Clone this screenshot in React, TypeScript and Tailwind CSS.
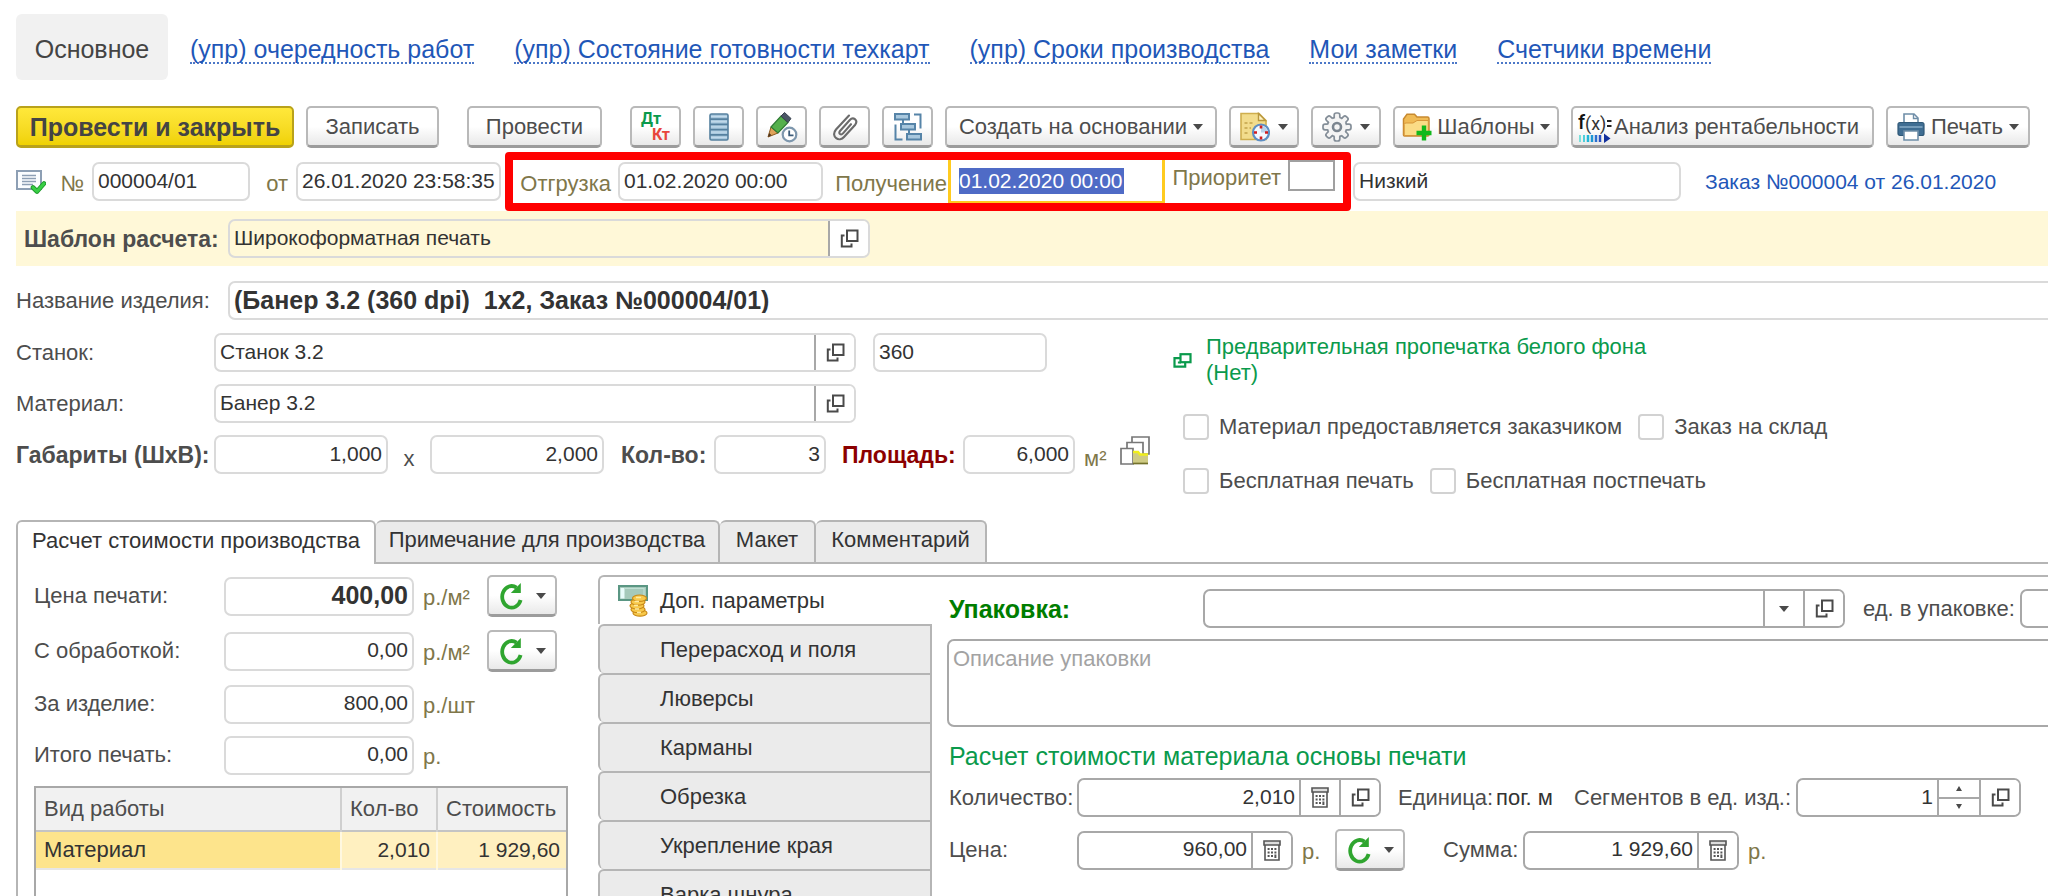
import { useId } from "react";
import type { ReactNode } from "react";

const soft = "border-[#dadada]";
const strong = "border-[#a8a8a8]";

function Caret() {
  return (
    <svg viewBox="0 0 12 7" className="h-[6px] w-[10px] shrink-0" aria-hidden="true">
      <path d="M0 0H12L6 7Z" fill="#4a4a4a" />
    </svg>
  );
}

function OpenIcon() {
  return (
    <svg viewBox="0 0 19 19" className="h-[19px] w-[19px]" fill="none" stroke="#4a4a4a" strokeWidth="2" aria-hidden="true">
      <rect x="7" y="1.5" width="10.5" height="10.5" />
      <path d="M4.5 6.5H1.8V17.4H11.5V14.5" />
    </svg>
  );
}

function GreenOpenIcon() {
  return (
    <svg viewBox="0 0 19 15" className="h-[15px] w-[19px] shrink-0" fill="none" stroke="#0a9a4c" strokeWidth="2.2" aria-hidden="true">
      <rect x="7.5" y="1.2" width="10" height="8" />
      <path d="M7 5.2H1.5V13.6H12.2V9.6" />
      <path d="M6 8.5V9.5H8" />
    </svg>
  );
}

function CalcIcon() {
  return (
    <svg viewBox="0 0 18 21" className="h-[21px] w-[18px]" fill="none" stroke="#555" strokeWidth="1.6" aria-hidden="true">
      <path d="M1 1H17V5H1Z" fill="#ddd" />
      <path d="M2 5V20H16V5" />
      <path d="M4.6 9H13.5M4.6 12.5H13.5M4.6 16H10" strokeWidth="2" strokeDasharray="2 1.4" />
      <path d="M12.4 14.5V18" strokeWidth="2" />
    </svg>
  );
}

function RefreshIcon() {
  return (
    <svg viewBox="0 0 26 28" className="h-7 w-[26px]" aria-hidden="true">
      <path d="M18.5 5.6A9.4 10.8 0 1 0 22.6 18" fill="none" stroke="#2fa52f" strokeWidth="3.8" />
      <path d="M22.8 1V11H12.8Z" fill="#2fa52f" />
    </svg>
  );
}

function ListIcon() {
  return (
    <svg viewBox="0 0 20 28" className="h-7 w-5" aria-hidden="true">
      <rect x="1" y="1" width="18" height="26" rx="1.5" fill="#a9c8de" stroke="#55809f" strokeWidth="1.6" />
      <path d="M1 6.2H19M1 11.4H19M1 16.6H19M1 21.8H19" stroke="#55809f" strokeWidth="1.8" />
      <path d="M2 3.5H18M2 8.7H18M2 13.9H18M2 19.1H18M2 24.4H18" stroke="#c5dcec" strokeWidth="1" />
    </svg>
  );
}

function PencilClockIcon() {
  return (
    <svg viewBox="0 0 32 32" className="h-8 w-8" aria-hidden="true">
      <path d="M2 26L5 16L12 22Z" fill="#e0a35a" stroke="#8c5a20" strokeWidth="1" />
      <path d="M2 26L3.2 22L5.5 24.3Z" fill="#4a3520" />
      <path d="M5 16L15 5L22 11.5L12 22Z" fill="#55b04c" stroke="#2f7a34" strokeWidth="1.2" />
      <path d="M15 5L18.5 1.5L25 7.5L22 11.5Z" fill="#4b5666" stroke="#38414e" strokeWidth="1" />
      <circle cx="23.5" cy="23.5" r="6.8" fill="#fff" stroke="#7e97ad" strokeWidth="2.2" />
      <path d="M23.2 19.5V24.4H27.5" fill="none" stroke="#3d5c7a" strokeWidth="1.8" />
    </svg>
  );
}

function ClipIcon() {
  return (
    <svg viewBox="0 0 28 28" className="h-7 w-7" fill="none" stroke="#6b6b6b" strokeWidth="2.1" strokeLinecap="round" aria-hidden="true">
      <path d="M18 2.5L5 16.5C2 20 3 23.5 5.2 25.2C7.5 27 10.8 26.5 13 24L24 12C26 9.5 25.5 7.5 24 6.2C22.3 5 20.3 5.4 18.8 7L9 18C8 19.3 8.2 20.4 9 21C9.8 21.7 11 21.5 12 20.4L20 11.2" />
    </svg>
  );
}

function TreeIcon() {
  return (
    <svg viewBox="0 0 28 28" className="h-7 w-7" fill="#a9c8de" stroke="#5684a8" strokeWidth="2" aria-hidden="true">
      <rect x="1" y="1" width="14" height="5.5" />
      <rect x="7" y="11" width="14" height="5.5" />
      <rect x="13" y="21" width="14" height="5.5" />
      <path d="M9 6V11M15 16.5V21" />
      <path d="M20 1.5H26.5V15.5M1.5 11.5V26.5H8.5" fill="none" />
    </svg>
  );
}

function DocClockIcon() {
  return (
    <svg viewBox="0 0 30 30" className="h-[30px] w-[30px]" aria-hidden="true">
      <path d="M1 1.5H19L26 8.5V27.5H1Z" fill="#f2dc8c" stroke="#cfae4e" strokeWidth="1.6" />
      <path d="M18.5 1.5L25.5 8.5H18.5Z" fill="#fff3c4" stroke="#b8973e" strokeWidth="1.4" />
      <path d="M4.5 11H13M4.5 16H11M4.5 21H9" stroke="#c2a34a" strokeWidth="1.4" strokeDasharray="3 2" />
      <circle cx="21" cy="20.5" r="8" fill="#f4f9ff" stroke="#5e8fc4" strokeWidth="2.2" />
      <path d="M21 20.5V13.5A7 7 0 0 1 27.5 20.5Z" fill="#b9d2ea" />
      <path d="M21 13.5V16.5M21 24.5V27.5M14 20.5H17M25 20.5H28" stroke="#d11f1f" strokeWidth="2.6" />
    </svg>
  );
}

function GearIcon() {
  const teeth = [0, 45, 90, 135, 180, 225, 270, 315];
  return (
    <svg viewBox="0 0 30 30" className="h-[30px] w-[30px]" aria-hidden="true">
      {teeth.map((a) => (
        <rect key={a} x="12.2" y="1" width="5.6" height="7" rx="2" fill="#f4f4f4" stroke="#848e98" strokeWidth="1.7" transform={`rotate(${a} 15 15)`} />
      ))}
      <circle cx="15" cy="15" r="9.8" fill="#f4f4f4" />
      <circle cx="15" cy="15" r="9.8" fill="none" stroke="#848e98" strokeWidth="1.7" strokeDasharray="3 4.697" strokeDashoffset="-2.35" />
      <circle cx="15" cy="15" r="4" fill="none" stroke="#7b858f" strokeWidth="2.6" />
    </svg>
  );
}

function FolderPlusIcon() {
  return (
    <svg viewBox="0 0 30 28" className="h-7 w-[30px] shrink-0" aria-hidden="true">
      <path d="M1.5 6V22Q1.5 23 2.5 23H25.5Q27 23 27 21.5V5.5Q27 4 25.5 4H15L12.5 1.2H5Z" fill="#f0bb55" stroke="#c88a30" strokeWidth="1.5" />
      <path d="M2.2 22.5V11.5Q2.2 10 4 10H11L15 7.5H26.3V22.5Z" fill="#fbdc86" stroke="#d8973a" strokeWidth="1" />
      <path d="M22 12.5V27.5M14.5 20H29.5" stroke="#12b81c" strokeWidth="4.4" />
    </svg>
  );
}

function FxIcon() {
  return (
    <svg viewBox="0 0 34 32" className="h-8 w-[34px] shrink-0" aria-hidden="true">
      <text x="0" y="18" fontFamily="Roboto, sans-serif" fontSize="20" fontWeight="500" fill="#111">f</text>
      <text x="7" y="19" fontFamily="Roboto, sans-serif" fontSize="18" fill="#333">(x)</text>
      <path d="M29 10H33.500M29 15H33.500" stroke="#222" strokeWidth="2" />
      <path d="M2 24V31" stroke="#7be0dc" strokeWidth="2" />
      <path d="M6 24V31" stroke="#4fd0da" strokeWidth="2" />
      <path d="M10 24V31" stroke="#22b6d8" strokeWidth="2.5" />
      <path d="M14 24V31" stroke="#1a96d4" strokeWidth="2.5" />
      <path d="M18 24V31" stroke="#2a6fd0" strokeWidth="2.5" />
      <path d="M22 24V31" stroke="#2a50c0" strokeWidth="2.5" />
      <path d="M26 22.5L32.5 27.5L26 32Z" fill="#12309c" />
    </svg>
  );
}

function PrinterIcon() {
  return (
    <svg viewBox="0 0 28 28" className="h-7 w-7 shrink-0" aria-hidden="true">
      <path d="M7 10V1H17L21 5V10" fill="#fff" stroke="#6f8ea8" strokeWidth="1.6" />
      <path d="M16.5 1V5.5H21" fill="none" stroke="#6f8ea8" strokeWidth="1.4" />
      <rect x="1" y="9.5" width="26" height="13" rx="2" fill="#3f6d92" stroke="#2f5877" strokeWidth="1.2" />
      <path d="M2.5 14H25.5" stroke="#82a7c4" strokeWidth="1.6" />
      <path d="M7 18H21V27H7Z" fill="#fff" stroke="#6f8ea8" strokeWidth="1.6" />
    </svg>
  );
}

function PostedIcon() {
  return (
    <svg viewBox="0 0 30 24" className="h-6 w-[30px] shrink-0" aria-hidden="true">
      <rect x="1" y="1" width="24" height="18" fill="#fbfdff" stroke="#8d9fb4" strokeWidth="2" />
      <path d="M6 5.5H20M6 8.5H20M6 11.5H20M6 14.5H17" stroke="#8d9fb4" strokeWidth="1.3" />
      <path d="M17 17.5L21 21.5L28 13.5" fill="none" stroke="#1f9a2c" strokeWidth="4.6" strokeLinecap="round" strokeLinejoin="round" />
      <path d="M17 17.5L21 21.5L28 13.5" fill="none" stroke="#38cf45" strokeWidth="2.8" strokeLinecap="round" strokeLinejoin="round" />
    </svg>
  );
}

function FoldersIcon() {
  return (
    <svg viewBox="0 0 30 29" className="h-[29px] w-[30px]" fill="#fff" stroke="#777" strokeWidth="1.7" aria-hidden="true">
      <path d="M12 1H29V18H12Z" />
      <path d="M7 6.5H23V22H7Z" />
      <path d="M1 12.5H13V28H1Z" />
      <path d="M13 17H18L20 19H28V27H13Z" fill="#cfcb84" stroke="none" />
      <path d="M13 16H18L20 18.5H28" stroke="#f0ee1c" strokeWidth="2.6" fill="none" />
      <path d="M13 27.5H28" stroke="#74722c" strokeWidth="1.7" />
    </svg>
  );
}

function MoneyIcon() {
  return (
    <svg viewBox="0 0 30 32" className="h-8 w-[30px] shrink-0" aria-hidden="true">
      <rect x="1" y="1" width="28" height="14" fill="#a5c9ba" stroke="#5a9683" strokeWidth="2" />
      <rect x="2.5" y="3" width="4" height="10.5" fill="#e8fbfa" />
      <path d="M6 3.5H26V12" fill="none" stroke="#bfe0d4" strokeWidth="1.2" />
      <g fill="#f7c84a" stroke="#c98a18" strokeWidth="1.2">
        <ellipse cx="22" cy="28" rx="7" ry="3.2" />
        <ellipse cx="20" cy="24.5" rx="7" ry="3.2" />
        <ellipse cx="19" cy="20.8" rx="7" ry="3.2" />
        <ellipse cx="20" cy="17" rx="7" ry="3.2" />
        <ellipse cx="21.5" cy="13.2" rx="7" ry="3.2" />
      </g>
      <path d="M18 12.5H23M16.500 16.500H21M16 20.500H20M17 24H21M19 27.500H23" stroke="#fdeaa0" strokeWidth="1.4" />
    </svg>
  );
}

function ToolButton({ className = "", label, children }: { className?: string; label?: string; children: ReactNode }) {
  return (
    <button
      type="button"
      aria-label={label}
      className={`flex h-[42px] shrink-0 items-center justify-center whitespace-nowrap rounded-[5px] border-2 border-b-[3px] border-[#b9b9b9] border-b-[#9c9c9c] bg-linear-to-b from-white from-50% to-[#e9e9e9] ${className}`}
    >
      {children}
    </button>
  );
}

type FieldProps = {
  label: string;
  value?: string;
  className: string;
  inputClass?: string;
  border?: string;
  id?: string;
  children?: ReactNode;
};

function Field({ label, value = "", className, inputClass = "text-[21px]", border = soft, id, children }: FieldProps) {
  return (
    <div className={`flex h-[39px] shrink-0 overflow-hidden rounded-[7px] border-2 ${border} ${className}`}>
      <input
        id={id}
        aria-label={id ? undefined : label}
        defaultValue={value}
        className={`min-w-0 flex-1 bg-transparent px-1 pb-[2px] text-[#333] outline-none ${inputClass}`}
      />
      {children}
    </div>
  );
}

function FieldButton({ label, children }: { label: string; children: ReactNode }) {
  return (
    <button type="button" aria-label={label} className="flex w-10 shrink-0 items-center justify-center border-l-2 border-[#a8a8a8] bg-white">
      {children}
    </button>
  );
}

function Check({ label }: { label: string }) {
  return (
    <label className="flex items-center gap-[10px] whitespace-nowrap">
      <input type="checkbox" className="h-[26px] w-[26px] shrink-0 appearance-none rounded-[4px] border-2 border-[#d2d2d2] bg-white" />
      {label}
    </label>
  );
}

function RefreshButton() {
  return (
    <ToolButton label="Обновить" className="w-[70px] gap-3">
      <RefreshIcon />
      <Caret />
    </ToolButton>
  );
}

function TopLinks() {
  const links = ["(упр) очередность работ", "(упр) Состояние готовности техкарт", "(упр) Сроки производства", "Мои заметки", "Счетчики времени"];
  return (
    <nav className="ml-4 flex items-center gap-10 whitespace-nowrap pt-[14px] text-[25px]">
      <span className="-mr-[18px] flex h-[66px] w-[152px] items-center justify-center rounded-md bg-[#f1f1f1] pt-1 text-[#444]">Основное</span>
      {links.map((t) => (
        <a key={t} href="#" className="mt-[6px] border-b-2 border-dotted border-[#4c78c8] leading-[26px] text-[#1f57b8]">
          {t}
        </a>
      ))}
    </nav>
  );
}

function Toolbar() {
  return (
    <div className="ml-4 mt-[26px] flex gap-[12px]">
      <button
        type="button"
        className="flex h-[42px] w-[278px] shrink-0 items-center justify-center whitespace-nowrap rounded-[5px] border-2 border-b-[3px] border-[#b9a21a] bg-linear-to-b from-[#ffe83a] to-[#f0d200] text-[25px] font-bold text-[#444]"
      >
        Провести и закрыть
      </button>
      <ToolButton className="mr-4 w-[133px]">Записать</ToolButton>
      <ToolButton className="mr-4 w-[135px]">Провести</ToolButton>
      <ToolButton label="Проводки" className="w-[51px]">
        <span className="flex flex-col font-['Roboto',sans-serif] text-[16px] font-bold leading-[16px]">
          <span className="text-left text-[#0a9a4c]">Дт</span>
          <span className="pl-[11px] text-[#e8453c]">Кт</span>
        </span>
      </ToolButton>
      <ToolButton label="Список" className="w-[51px]"><ListIcon /></ToolButton>
      <ToolButton label="История" className="w-[51px]"><PencilClockIcon /></ToolButton>
      <ToolButton label="Файлы" className="w-[51px]"><ClipIcon /></ToolButton>
      <ToolButton label="Структура" className="w-[51px]"><TreeIcon /></ToolButton>
      <ToolButton className="w-[272px] gap-[6px]">Создать на основании <Caret /></ToolButton>
      <ToolButton label="Напоминание" className="w-[70px] gap-2"><DocClockIcon /><Caret /></ToolButton>
      <ToolButton label="Настройки" className="w-[70px] gap-2"><GearIcon /><Caret /></ToolButton>
      <ToolButton className="w-[166px] gap-[5px]"><FolderPlusIcon />Шаблоны <Caret /></ToolButton>
      <ToolButton className="w-[303px] gap-[2px] pr-2"><FxIcon />Анализ рентабельности</ToolButton>
      <ToolButton className="w-[144px] gap-[6px]"><PrinterIcon />Печать <Caret /></ToolButton>
    </div>
  );
}

function DocumentRow() {
  return (
    <div className="ml-4 mt-1 flex h-[59px] items-center whitespace-nowrap text-[#80774a]">
      <PostedIcon />
      <label htmlFor="num" className="w-[46px] shrink-0 pr-2 pt-1 text-right">№</label>
      <Field id="num" label="Номер" value="000004/01" className="w-[158px]" />
      <label htmlFor="date" className="w-[46px] shrink-0 pr-2 pt-1 text-right">от</label>
      <Field id="date" label="Дата" value="26.01.2020 23:58:35" className="w-[205px]" />
      <div className="ml-1 flex h-[59px] w-[846px] shrink-0 items-center rounded-[4px] border-8 border-[#ff0000]">
        <label htmlFor="ship" className="w-[105px] shrink-0 pr-[7px] pt-1 text-right">Отгрузка</label>
        <Field id="ship" label="Отгрузка" value="01.02.2020 00:00" className="w-[205px]" />
        <label htmlFor="recv" className="w-[125px] shrink-0 pr-[1px] pt-1 text-right">Получение</label>
        <div className="flex h-full w-[217px] shrink-0 items-center border-x-[3px] border-b-2 border-[#ffcb1f] pl-2">
          <input id="recv" defaultValue="01.02.2020 00:00" className="h-[26px] w-[165px] bg-[#4f6bc6] text-[21px] text-white outline-none" />
        </div>
        <label htmlFor="prio" className="w-[123px] shrink-0 pb-2 pr-[7px] text-right">Приоритет</label>
        <input id="prio" className="h-[31px] w-[47px] self-start border-2 border-[#a0a0a0] bg-white" />
      </div>
      <Field label="Приоритет заказа" value="Низкий" className="ml-[2px] w-[328px]" />
      <a href="#" className="ml-6 text-[21px] text-[#1f57b8]">Заказ №000004 от 26.01.2020</a>
    </div>
  );
}

function TemplateRow() {
  return (
    <div className="ml-4 flex h-[55px] items-center bg-[#fff8d8] pl-2">
      <label htmlFor="tpl" className="w-[204px] shrink-0 whitespace-nowrap text-[23px] font-bold">Шаблон расчета:</label>
      <Field id="tpl" label="Шаблон расчета" value="Широкоформатная печать" className="w-[642px]">
        <FieldButton label="Открыть шаблон"><OpenIcon /></FieldButton>
      </Field>
    </div>
  );
}

function ProductFields() {
  return (
    <div className="ml-4">
      <div className="flex items-center pt-[15px]">
        <label htmlFor="name" className="w-[212px] shrink-0 whitespace-nowrap">Название изделия:</label>
        <Field id="name" label="Название изделия" value="(Банер 3.2 (360 dpi)  1x2, Заказ №000004/01)" className="-mr-3 flex-1" inputClass="font-bold text-[25px]" />
      </div>
      <div className="flex items-start">
        <div className="mt-[13px] flex w-[1157px] shrink-0 flex-col gap-3 whitespace-nowrap">
          <div className="flex items-center">
            <label htmlFor="machine" className="w-[198px]">Станок:</label>
            <Field id="machine" label="Станок" value="Станок 3.2" className="w-[642px]">
              <FieldButton label="Открыть станок"><OpenIcon /></FieldButton>
            </Field>
            <Field label="Разрешение" value="360" className="ml-[17px] w-[174px]" />
          </div>
          <div className="flex items-center">
            <label htmlFor="material" className="w-[198px]">Материал:</label>
            <Field id="material" label="Материал" value="Банер 3.2" className="w-[642px]">
              <FieldButton label="Открыть материал"><OpenIcon /></FieldButton>
            </Field>
          </div>
          <div className="flex items-center">
            <label htmlFor="width" className="w-[198px] text-[23px] font-bold">Габариты (ШxВ):</label>
            <Field id="width" label="Ширина" value="1,000" className="w-[174px]" inputClass="text-[21px] text-right" />
            <span className="w-[42px] pt-2 text-center">x</span>
            <Field label="Высота" value="2,000" className="w-[174px]" inputClass="text-[21px] text-right" />
            <label htmlFor="qty" className="w-[110px] pl-[17px] text-[23px] font-bold">Кол-во:</label>
            <Field id="qty" label="Кол-во" value="3" className="w-[112px]" inputClass="text-[21px] text-right" />
            <label htmlFor="area" className="w-[137px] pl-4 text-[23px] font-bold text-[#8b0000]">Площадь:</label>
            <Field id="area" label="Площадь" value="6,000" className="w-[112px]" inputClass="text-[21px] text-right" />
            <span className="ml-[9px] pt-2 text-[#80774a]">м²</span>
            <button type="button" aria-label="Подбор" className="ml-[14px] pb-2"><FoldersIcon /></button>
          </div>
        </div>
        <div className="mt-[14px] flex flex-col gap-7">
          <div className="flex items-center gap-[14px] text-[#0a9a4c]">
            <GreenOpenIcon />
            <a href="#" className="whitespace-nowrap leading-[26px]">Предварительная пропечатка белого фона<br />(Нет)</a>
          </div>
          <div className="flex gap-4 pl-[10px]">
            <Check label="Материал предоставляется заказчиком" />
            <Check label="Заказ на склад" />
          </div>
          <div className="flex gap-4 pl-[10px]">
            <Check label="Бесплатная печать" />
            <Check label="Бесплатная постпечать" />
          </div>
        </div>
      </div>
    </div>
  );
}

function MainTabs() {
  const tab = "flex h-full items-center justify-center whitespace-nowrap rounded-t-[6px] border-2 border-b-0 border-[#b5b5b5] pb-1 text-[#333]";
  return (
    <div role="tablist" className="ml-4 mt-[26px] flex h-[44px]">
      <button type="button" role="tab" aria-selected="true" className={`${tab} w-[360px] bg-white`}>Расчет стоимости производства</button>
      <div className="flex flex-1 border-b-2 border-[#b5b5b5]">
        <button type="button" role="tab" className={`${tab} w-[344px] border-l-0 bg-[#ebebeb]`}>Примечание для производства</button>
        <button type="button" role="tab" className={`${tab} w-[96px] border-l-0 bg-[#ebebeb]`}>Макет</button>
        <button type="button" role="tab" className={`${tab} w-[171px] border-l-0 bg-[#ebebeb]`}>Комментарий</button>
      </div>
    </div>
  );
}

function PriceRow({ label, value, unit, bold, refresh }: { label: string; value: string; unit: string; bold?: boolean; refresh?: boolean }) {
  const id = useId();
  return (
    <div className="flex h-[42px] items-center whitespace-nowrap">
      <label htmlFor={id} className="w-[190px]">{label}</label>
      <Field id={id} label={label} value={value} className="w-[190px]" inputClass={bold ? "text-right font-bold text-[25px]" : "text-[21px] text-right"} />
      <span className="ml-[9px] w-[64px] pt-1 text-[#80774a]">{unit}</span>
      {refresh && <RefreshButton />}
    </div>
  );
}

function PricePanel() {
  return (
    <div className="w-[582px] shrink-0 border-l-2 border-[#b5b5b5] pl-4 pt-[11px]">
      <PriceRow label="Цена печати:" value="400,00" unit="р./м²" bold refresh />
      <div className="h-[13px]" />
      <PriceRow label="С обработкой:" value="0,00" unit="р./м²" refresh />
      <div className="h-[11px]" />
      <PriceRow label="За изделие:" value="800,00" unit="р./шт" />
      <div className="h-[9px]" />
      <PriceRow label="Итого печать:" value="0,00" unit="р." />
      <div className="mt-[10px] h-[220px] w-[534px] border-2 border-[#a8a8a8]">
        <table className="w-full table-fixed border-collapse whitespace-nowrap">
          <thead>
            <tr className="h-[43px] border-b-2 border-[#c4c4c4] bg-[#f1f1f1] text-left">
              <th className="w-[305px] border-r-2 border-[#cfcfcf] px-2 font-normal">Вид работы</th>
              <th className="w-[96px] border-r-2 border-[#cfcfcf] px-2 font-normal">Кол-во</th>
              <th className="px-2 font-normal">Стоимость</th>
            </tr>
          </thead>
          <tbody>
            <tr className="h-[38px] border-b-2 border-[#e6e6e6] bg-[#fff0c0] text-[#333]">
              <td className="border-r-2 border-[#fff8e0] bg-[#fde48c] px-2">Материал</td>
              <td className="border-r-2 border-[#fff8e0] px-[6px] text-right text-[21px]">2,010</td>
              <td className="px-[6px] text-right text-[21px]">1 929,60</td>
            </tr>
          </tbody>
        </table>
      </div>
    </div>
  );
}

function SideTabs() {
  const tabs = ["Перерасход и поля", "Люверсы", "Карманы", "Обрезка", "Укрепление края", "Варка шнура"];
  return (
    <div role="tablist" className="w-[334px] shrink-0 text-[#333]">
      <button type="button" role="tab" aria-selected="true" className="flex h-[49px] w-full items-center gap-3 rounded-tl-[6px] border-l-2 border-t-2 border-[#b5b5b5] bg-white pl-[18px]">
        <MoneyIcon />
        Доп. параметры
      </button>
      {tabs.map((t) => (
        <button key={t} type="button" role="tab" className="flex h-[49px] w-full items-center rounded-l-[6px] border-l-2 border-r-2 border-t-2 border-[#b5b5b5] bg-[#ebebeb] pl-[60px]">
          {t}
        </button>
      ))}
    </div>
  );
}

function Spinner() {
  return (
    <div className="flex w-[42px] shrink-0 flex-col border-l-2 border-[#a8a8a8]">
      <button type="button" aria-label="Больше" className="flex flex-1 items-center justify-center border-b-2 border-[#a8a8a8]">
        <svg viewBox="0 0 6 5" className="h-[5px] w-[6px]"><path d="M3 0L6 5H0Z" fill="#4a4a4a" /></svg>
      </button>
      <button type="button" aria-label="Меньше" className="flex flex-1 items-center justify-center">
        <svg viewBox="0 0 6 5" className="h-[5px] w-[6px]"><path d="M3 5L6 0H0Z" fill="#4a4a4a" /></svg>
      </button>
    </div>
  );
}

function MaterialPanel() {
  return (
    <div className="min-w-0 flex-1 border-t-2 border-[#b5b5b5] pl-[15px] pt-3">
      <div className="flex items-center whitespace-nowrap">
        <label htmlFor="pack" className="w-[256px] shrink-0 pl-[2px] text-[25px] font-bold text-[#007d00]">Упаковка:</label>
        <Field id="pack" label="Упаковка" className="w-[642px]" border={strong}>
          <FieldButton label="Выбрать"><Caret /></FieldButton>
          <FieldButton label="Открыть упаковку"><OpenIcon /></FieldButton>
        </Field>
        <label htmlFor="units" className="w-[175px] shrink-0 pl-[18px]">ед. в упаковке:</label>
        <Field id="units" label="ед. в упаковке" className="w-[120px]" border={strong} />
      </div>
      <textarea
        aria-label="Описание упаковки"
        placeholder="Описание упаковки"
        className="-mr-3 mt-[11px] block h-[88px] w-[calc(100%+12px)] resize-none rounded-[7px] border-2 border-[#a8a8a8] px-1 pt-[5px] leading-[26px] outline-none placeholder:text-[#a3a3a3]"
      />
      <h2 className="mt-[14px] pl-[2px] text-[25px] leading-[30px] text-[#0a9a4c]">Расчет стоимости материала основы печати</h2>
      <div className="mt-[7px] flex items-center whitespace-nowrap">
        <label htmlFor="amount" className="w-[130px] shrink-0 pl-[2px]">Количество:</label>
        <Field id="amount" label="Количество" value="2,010" className="w-[304px]" border={strong} inputClass="text-[21px] text-right">
          <FieldButton label="Калькулятор"><CalcIcon /></FieldButton>
          <FieldButton label="Открыть количество"><OpenIcon /></FieldButton>
        </Field>
        <span className="w-[115px] shrink-0 pl-[17px]">Единица:</span>
        <span className="w-[78px] shrink-0 text-[#333]">пог. м</span>
        <label htmlFor="segments" className="w-[222px] shrink-0">Сегментов в ед. изд.:</label>
        <Field id="segments" label="Сегментов" value="1" className="w-[225px]" border={strong} inputClass="text-[21px] text-right">
          <Spinner />
          <FieldButton label="Открыть сегменты"><OpenIcon /></FieldButton>
        </Field>
      </div>
      <div className="mt-[12px] flex items-center whitespace-nowrap">
        <label htmlFor="price" className="w-[130px] shrink-0 pl-[2px]">Цена:</label>
        <Field id="price" label="Цена" value="960,00" className="w-[216px]" border={strong} inputClass="text-[21px] text-right">
          <FieldButton label="Калькулятор цены"><CalcIcon /></FieldButton>
        </Field>
        <span className="w-[42px] shrink-0 pl-[9px] pt-1 text-[#80774a]">р.</span>
        <RefreshButton />
        <label htmlFor="sum" className="w-[118px] shrink-0 pl-[38px]">Сумма:</label>
        <Field id="sum" label="Сумма" value="1 929,60" className="w-[216px]" border={strong} inputClass="text-[21px] text-right">
          <FieldButton label="Калькулятор суммы"><CalcIcon /></FieldButton>
        </Field>
        <span className="pl-[9px] pt-1 text-[#80774a]">р.</span>
      </div>
    </div>
  );
}

export default function App() {
  return (
    <main className="h-screen overflow-hidden bg-white font-['Liberation_Sans',Arial,sans-serif] text-[22px] leading-[26px] text-[#4d4d4d]">
      <TopLinks />
      <Toolbar />
      <DocumentRow />
      <TemplateRow />
      <ProductFields />
      <MainTabs />
      <div className="ml-4 flex items-start">
        <PricePanel />
        <div className="mt-[11px] flex min-w-0 flex-1 items-start">
          <SideTabs />
          <MaterialPanel />
        </div>
      </div>
    </main>
  );
}
